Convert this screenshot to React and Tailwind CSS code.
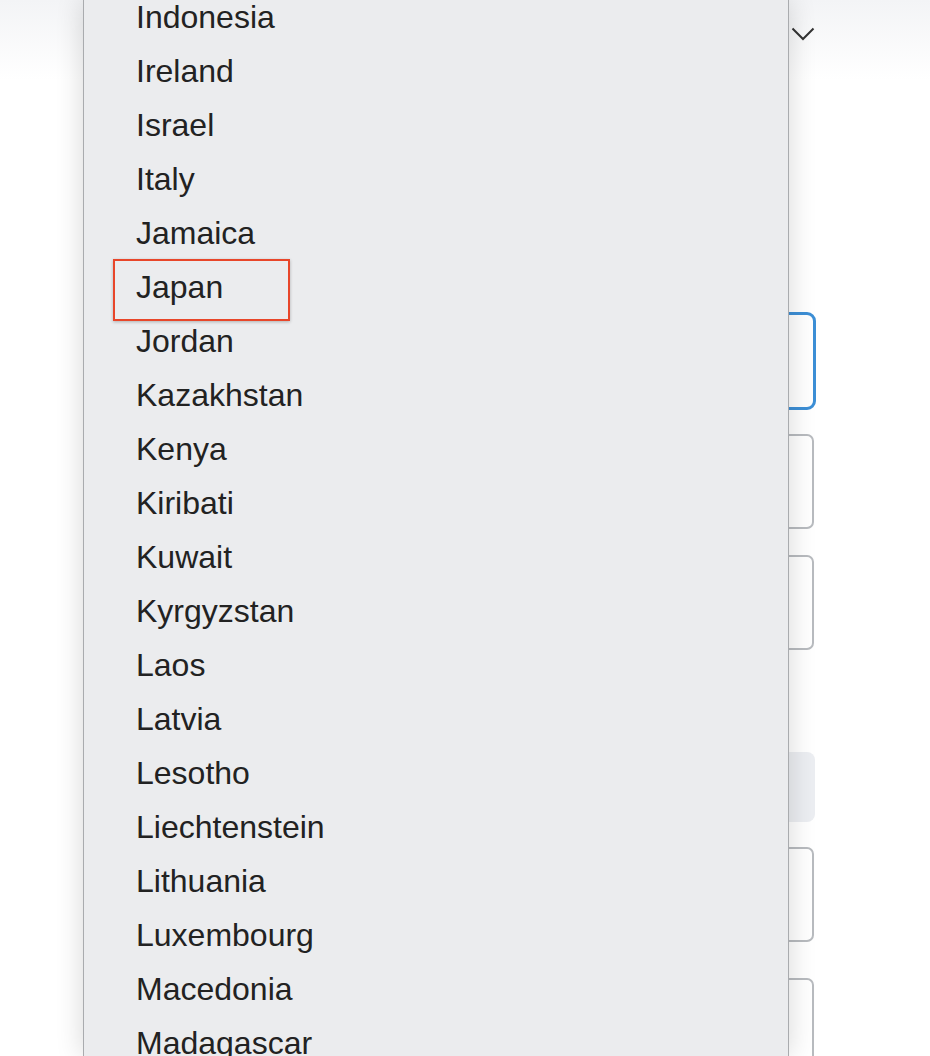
const countries = [
  "Indonesia",
  "Ireland",
  "Israel",
  "Italy",
  "Jamaica",
  "Japan",
  "Jordan",
  "Kazakhstan",
  "Kenya",
  "Kiribati",
  "Kuwait",
  "Kyrgyzstan",
  "Laos",
  "Latvia",
  "Lesotho",
  "Liechtenstein",
  "Lithuania",
  "Luxembourg",
  "Macedonia",
  "Madagascar",
];

const App = () => {
  return (
    <div
      className="relative w-[930px] h-[1056px] overflow-hidden bg-white"
      style={{ fontFamily: '"Liberation Sans", Arial, sans-serif' }}
    >
      {/* Page underneath */}
      <div className="h-[80px] bg-gradient-to-b from-[#f3f4f6] to-white flex items-center justify-end pr-[115px]">
        <svg width="24" height="14" viewBox="0 0 24 14" fill="none" className="mt-[-12px]">
          <path d="M1.5 1.5 L12 12 L22.5 1.5" stroke="#333" strokeWidth="2" />
        </svg>
      </div>

      <div className="ml-[114px] w-[702px] flex flex-col">
        <div className="h-[232px]" />
        <div className="h-[98px] rounded-[9px] border-[3px] border-[#3d8fd6]" />
        <div className="mt-[24px] h-[95px] w-[700px] rounded-[7px] border-2 border-[#b8bbbf]" />
        <div className="mt-[26px] h-[95px] w-[700px] rounded-[7px] border-2 border-[#b8bbbf]" />
        <div className="mt-[102px] h-[70px] w-[701px] rounded-[8px] bg-[#eceef2]" />
        <div className="mt-[25px] h-[95px] w-[700px] rounded-[7px] border-2 border-[#b8bbbf]" />
        <div className="mt-[36px] h-[95px] w-[700px] rounded-[7px] border-2 border-[#b8bbbf]" />
      </div>

      {/* Open dropdown list */}
      <div className="absolute top-0 bottom-0 left-[83px] w-[706px] bg-[#ebecee] border-x border-[#a9abae] shadow-[0_0_26px_rgba(0,0,0,0.16)] overflow-hidden">
        <ul className="-mt-[10px]">
          {countries.map((name) => (
            <li
              key={name}
              className="relative h-[54px] flex items-center pl-[52px] text-[32px] text-[#222]"
            >
              {name === "Japan" && (
                <span className="absolute left-[29px] top-[-1px] w-[177px] h-[62px] border-[2.5px] border-[#e8462a] shadow-[0_1px_3px_rgba(0,0,0,0.25)]" />
              )}
              {name}
            </li>
          ))}
        </ul>
      </div>
    </div>
  );
};

export default App;
